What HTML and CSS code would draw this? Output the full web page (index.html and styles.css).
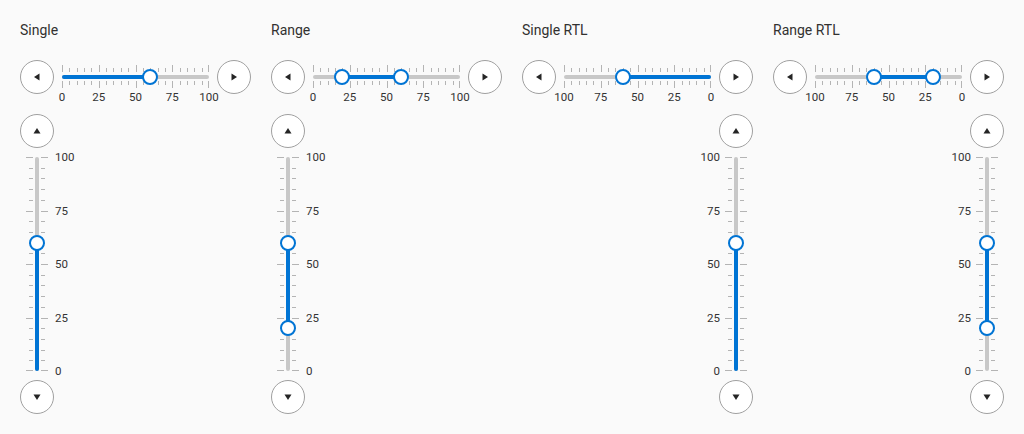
FILE: index.html
```html
<!DOCTYPE html>
<html lang="en">
<head>
  <meta charset="UTF-8">
  <title>Sliders</title>
  <link rel="stylesheet" href="styles.css">
</head>
<body>

  <div class="page">

    <section class="column">
      <h3 class="title">Single</h3>
      <div class="hrow">
        <button class="round"><svg width="8" height="8" viewBox="0 0 8 8"><path d="M6.5 0.5 L1 4 L6.5 7.5 Z"/></svg></button>
        <div class="slider horizontal" data-values="60"></div>
        <button class="round"><svg width="8" height="8" viewBox="0 0 8 8"><path d="M1.5 0.5 L7 4 L1.5 7.5 Z"/></svg></button>
      </div>
      <div class="vcol">
        <button class="round"><svg width="8" height="8" viewBox="0 0 8 8"><path d="M0.5 6.5 L4 1 L7.5 6.5 Z"/></svg></button>
        <div class="slider vertical" data-values="60"></div>
        <button class="round"><svg width="8" height="8" viewBox="0 0 8 8"><path d="M0.5 1.5 L4 7 L7.5 1.5 Z"/></svg></button>
      </div>
    </section>

    <section class="column">
      <h3 class="title">Range</h3>
      <div class="hrow">
        <button class="round"><svg width="8" height="8" viewBox="0 0 8 8"><path d="M6.5 0.5 L1 4 L6.5 7.5 Z"/></svg></button>
        <div class="slider horizontal" data-values="20,60"></div>
        <button class="round"><svg width="8" height="8" viewBox="0 0 8 8"><path d="M1.5 0.5 L7 4 L1.5 7.5 Z"/></svg></button>
      </div>
      <div class="vcol">
        <button class="round"><svg width="8" height="8" viewBox="0 0 8 8"><path d="M0.5 6.5 L4 1 L7.5 6.5 Z"/></svg></button>
        <div class="slider vertical" data-values="20,60"></div>
        <button class="round"><svg width="8" height="8" viewBox="0 0 8 8"><path d="M0.5 1.5 L4 7 L7.5 1.5 Z"/></svg></button>
      </div>
    </section>

    <section class="column rtl">
      <h3 class="title">Single RTL</h3>
      <div class="hrow">
        <button class="round"><svg width="8" height="8" viewBox="0 0 8 8"><path d="M6.5 0.5 L1 4 L6.5 7.5 Z"/></svg></button>
        <div class="slider horizontal rtl" data-values="60"></div>
        <button class="round"><svg width="8" height="8" viewBox="0 0 8 8"><path d="M1.5 0.5 L7 4 L1.5 7.5 Z"/></svg></button>
      </div>
      <div class="vcol">
        <button class="round"><svg width="8" height="8" viewBox="0 0 8 8"><path d="M0.5 6.5 L4 1 L7.5 6.5 Z"/></svg></button>
        <div class="slider vertical rtl" data-values="60"></div>
        <button class="round"><svg width="8" height="8" viewBox="0 0 8 8"><path d="M0.5 1.5 L4 7 L7.5 1.5 Z"/></svg></button>
      </div>
    </section>

    <section class="column rtl">
      <h3 class="title">Range RTL</h3>
      <div class="hrow">
        <button class="round"><svg width="8" height="8" viewBox="0 0 8 8"><path d="M6.5 0.5 L1 4 L6.5 7.5 Z"/></svg></button>
        <div class="slider horizontal rtl" data-values="20,60"></div>
        <button class="round"><svg width="8" height="8" viewBox="0 0 8 8"><path d="M1.5 0.5 L7 4 L1.5 7.5 Z"/></svg></button>
      </div>
      <div class="vcol">
        <button class="round"><svg width="8" height="8" viewBox="0 0 8 8"><path d="M0.5 6.5 L4 1 L7.5 6.5 Z"/></svg></button>
        <div class="slider vertical rtl" data-values="20,60"></div>
        <button class="round"><svg width="8" height="8" viewBox="0 0 8 8"><path d="M0.5 1.5 L4 7 L7.5 1.5 Z"/></svg></button>
      </div>
    </section>

  </div>

  <script src="script.js"></script>
</body>
</html>
```

FILE: styles.css
```css
body {
  margin: 0;
  background: #fafafa;
  font-family: Roboto, "Liberation Sans", sans-serif;
  color: #333;
}
.page {
  display: flex;
  gap: 20px;
  padding: 20px;
}
.column {
  width: 231px;
  display: flex;
  flex-direction: column;
}
.title {
  margin: 0;
  font-size: 14px;
  font-weight: normal;
  line-height: 20px;
  color: #323130;
}
.hrow {
  display: flex;
  align-items: center;
  gap: 8px;
  margin-top: 20px;
  height: 34px;
}
.vcol {
  display: flex;
  flex-direction: column;
  align-items: flex-start;
  gap: 9px;
  margin-top: 20px;
}
.column.rtl .vcol {
  align-items: flex-end;
}
.round {
  width: 34px;
  height: 34px;
  padding: 0;
  border: 1px solid #a0a0a0;
  border-radius: 50%;
  background: #fff;
  display: flex;
  align-items: center;
  justify-content: center;
  flex-shrink: 0;
}
.round svg {
  fill: #252525;
}

.slider {
  position: relative;
}
.slider.horizontal {
  width: 147px;
  height: 34px;
}
.slider.vertical {
  width: 34px;
  height: 214px;
}
.track, .fill {
  position: absolute;
  border-radius: 2px;
}
.track {
  background: #c8c8c8;
}
.fill {
  background: #0074d4;
}
.horizontal .track {
  left: 0;
  right: 0;
  top: 15px;
  height: 4px;
}
.horizontal .fill {
  top: 15px;
  height: 4px;
}
.vertical .track {
  top: 0;
  bottom: 0;
  left: 15px;
  width: 4px;
}
.vertical .fill {
  left: 15px;
  width: 4px;
}
.tick {
  position: absolute;
  background: #b4b4b4;
}
.horizontal .tick {
  width: 1px;
  height: 4px;
}
.horizontal .tick.before { top: 8px; }
.horizontal .tick.after { top: 21px; }
.horizontal .tick.major { height: 7px; }
.horizontal .tick.before.major { top: 5px; }
.vertical .tick {
  height: 1px;
  width: 4px;
}
.vertical .tick.before { left: 9px; }
.vertical .tick.after { left: 21px; }
.vertical .tick.major { width: 7px; }
.vertical .tick.before.major { left: 6px; }
.label {
  position: absolute;
  font-size: 11.5px;
  line-height: 14px;
  color: #333;
  white-space: nowrap;
}
.horizontal .label {
  top: 30px;
  transform: translateX(-50%);
}
.vertical .label {
  left: 35px;
  transform: translateY(-50%);
}
.vertical.rtl .label {
  left: auto;
  right: 33px;
}
.thumb {
  position: absolute;
  width: 16px;
  height: 16px;
  box-sizing: border-box;
  border: 2px solid #0074d4;
  border-radius: 50%;
  background: #fff;
}
.horizontal .thumb {
  top: 9px;
  margin-left: -8px;
}
.vertical .thumb {
  left: 9px;
  margin-top: -8px;
}
```

FILE: script.js
```js
document.querySelectorAll('.slider').forEach(function (el) {
  const vertical = el.classList.contains('vertical');
  const rtl = el.classList.contains('rtl');
  const values = el.dataset.values.split(',').map(Number);
  const length = vertical ? el.offsetHeight : el.offsetWidth;
  const prop = vertical ? 'top' : 'left';

  // pixel offset along the axis for a value 0..100
  function pos(v) {
    const flip = vertical || rtl;
    return (flip ? 100 - v : v) / 100 * length;
  }

  function add(cls) {
    const node = document.createElement('span');
    node.className = cls;
    el.appendChild(node);
    return node;
  }

  for (let v = 0; v <= 100; v += 5) {
    const major = v % 25 === 0;
    const p = Math.min(Math.round(pos(v)), length - 1);
    ['before', 'after'].forEach(function (side) {
      add('tick ' + side + (major ? ' major' : '')).style[prop] = p + 'px';
    });
    if (major) {
      const label = add('label');
      label.textContent = v;
      label.style[prop] = pos(v) + 'px';
    }
  }

  add('track');

  const ends = values.length === 1 ? [0, values[0]] : values;
  const a = pos(ends[0]);
  const b = pos(ends[1]);
  const fill = add('fill');
  fill.style[prop] = Math.min(a, b) + 'px';
  fill.style[vertical ? 'height' : 'width'] = Math.abs(a - b) + 'px';

  values.forEach(function (v) {
    add('thumb').style[prop] = pos(v) + 'px';
  });
});
```
